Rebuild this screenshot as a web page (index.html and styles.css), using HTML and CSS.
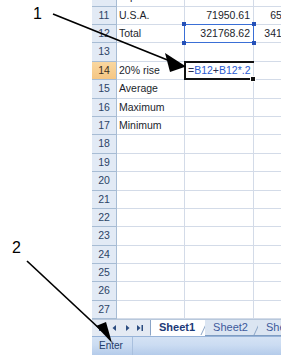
FILE: index.html
```html
<!DOCTYPE html>
<html>
<head>
<meta charset="utf-8">
<link rel="stylesheet" href="styles.css">
</head>
<body>
<div class="page">
  <div class="sheet">
    <div class="viewport">
      <div class="grid">
        <div class="rh">10</div><div class="c">Japan</div><div class="c num">52712.52</div><div class="c num">62174.30</div>
        <div class="rh">11</div><div class="c">U.S.A.</div><div class="c num">71950.61</div><div class="c num">65281.57</div>
        <div class="rh">12</div><div class="c">Total</div><div class="c num ref">321768.62</div><div class="c num">341992.07</div>
        <div class="rh">13</div><div class="c"></div><div class="c"></div><div class="c"></div>
        <div class="rh active">14</div><div class="c">20% rise</div><div class="c edit"><span class="op">=</span><span class="rf">B12</span><span class="op">+</span><span class="rf">B12</span><span class="rf">*.2</span></div><div class="c"></div>
        <div class="rh">15</div><div class="c">Average</div><div class="c"></div><div class="c"></div>
        <div class="rh">16</div><div class="c">Maximum</div><div class="c"></div><div class="c"></div>
        <div class="rh">17</div><div class="c">Minimum</div><div class="c"></div><div class="c"></div>
        <div class="rh">18</div><div class="c"></div><div class="c"></div><div class="c"></div>
        <div class="rh">19</div><div class="c"></div><div class="c"></div><div class="c"></div>
        <div class="rh">20</div><div class="c"></div><div class="c"></div><div class="c"></div>
        <div class="rh">21</div><div class="c"></div><div class="c"></div><div class="c"></div>
        <div class="rh">22</div><div class="c"></div><div class="c"></div><div class="c"></div>
        <div class="rh">23</div><div class="c"></div><div class="c"></div><div class="c"></div>
        <div class="rh">24</div><div class="c"></div><div class="c"></div><div class="c"></div>
        <div class="rh">25</div><div class="c"></div><div class="c"></div><div class="c"></div>
        <div class="rh">26</div><div class="c"></div><div class="c"></div><div class="c"></div>
        <div class="rh">27</div><div class="c"></div><div class="c"></div><div class="c"></div>
      </div>
    </div>
    <div class="tabbar">
      <div class="nav">
        <svg width="58" height="16" viewBox="0 0 58 16">
          <rect x="7" y="5" width="1.5" height="6" fill="#2b4c80"/>
          <polygon points="13,5 13,11 9.5,8" fill="#2b4c80"/>
          <polygon points="24,5 24,11 20.5,8" fill="#2b4c80"/>
          <polygon points="34,5 34,11 37.5,8" fill="#2b4c80"/>
          <polygon points="45,5 45,11 48.5,8" fill="#2b4c80"/>
          <rect x="49.5" y="5" width="1.5" height="6" fill="#2b4c80"/>
        </svg>
      </div>
      <div class="tab active">Sheet1</div>
      <div class="tab">Sheet2</div>
      <div class="tab">Sheet3</div>
    </div>
    <div class="statusbar">
      <div class="mode">Enter</div>
    </div>
  </div>
  <svg class="annot" width="281" height="355" viewBox="0 0 281 355">
    <text x="33" y="19" class="lbl">1</text>
    <text x="12" y="253" class="lbl">2</text>
    <line x1="53" y1="14" x2="170" y2="61" stroke="#000" stroke-width="1.7"/>
    <polygon points="165,53 186,66.5 170,72" fill="#000"/>
    <line x1="27" y1="261" x2="102" y2="331" stroke="#000" stroke-width="1.7"/>
    <polygon points="96,326 112,343 106,322" fill="#000"/>
  </svg>
</div>
</body>
</html>
```

FILE: styles.css
```css
html, body {
  margin: 0;
  padding: 0;
  background: #fff;
}

.page {
  position: relative;
  width: 281px;
  height: 355px;
  overflow: hidden;
  padding-left: 92px;
  box-sizing: border-box;
  font-family: "Liberation Sans", Arial, sans-serif;
}

.sheet {
  width: 240px;
  height: 355px;
  display: flex;
  flex-direction: column;
}

.viewport {
  height: 319px;
  overflow: hidden;
  flex: none;
}

.grid {
  display: grid;
  grid-template-columns: 25px 68px 69px 64px;
  grid-auto-rows: 18.4px;
  margin-top: -11.8px;
}

.grid > div {
  box-sizing: border-box;
  white-space: nowrap;
  overflow: hidden;
  font-size: 10.5px;
  line-height: 17.4px;
}

.rh {
  background: #e2eaf5;
  border-right: 1px solid #a7bcd4;
  border-bottom: 1px solid #a7bcd4;
  text-align: center;
  color: #2c4466;
}

.rh.active {
  background: linear-gradient(#f9d7a0, #f5c683);
  color: #3a3020;
}

.c {
  border-right: 1px solid #d3dbe8;
  border-bottom: 1px solid #d3dbe8;
  padding: 0 2px;
  color: #1b1e2c;
}

.num {
  text-align: right;
  padding-right: 3px;
}

.ref {
  position: relative;
  overflow: visible !important;
}

.ref::before {
  content: "";
  position: absolute;
  left: -1px;
  top: -1px;
  right: -1px;
  bottom: -1px;
  border: 1.5px solid #3a6fd6;
}

.ref::after {
  content: "";
  position: absolute;
  left: -3px;
  top: -3px;
  right: -3px;
  bottom: -3px;
  background:
    linear-gradient(#2550b8, #2550b8) left top / 4px 4px no-repeat,
    linear-gradient(#2550b8, #2550b8) right top / 4px 4px no-repeat,
    linear-gradient(#2550b8, #2550b8) left bottom / 4px 4px no-repeat,
    linear-gradient(#2550b8, #2550b8) right bottom / 4px 4px no-repeat;
}

.edit {
  position: relative;
  overflow: visible !important;
  padding-left: 3px !important;
}

.edit::before {
  content: "";
  position: absolute;
  left: -1px;
  top: -1px;
  right: -1px;
  bottom: -1px;
  border-top: 2px solid #111;
  border-left: 2px solid #111;
  border-bottom: 2px solid #111;
}

.edit::after {
  content: "";
  position: absolute;
  right: -3px;
  bottom: -3px;
  width: 4px;
  height: 4px;
  background: #111;
  border: 1px solid #fff;
}

.op {
  color: #2a2f55;
}

.rf {
  color: #2a5bd0;
}

.tabbar {
  height: 17px;
  flex: none;
  display: flex;
  align-items: stretch;
  background: #e4eaf3;
  border-top: 1px solid #b8c8dc;
  box-sizing: border-box;
}

.nav {
  width: 58px;
  flex: none;
  display: flex;
  align-items: center;
}

.tab {
  position: relative;
  padding: 0 10px 0 8px;
  font-size: 11px;
  line-height: 15px;
  color: #3d5a9c;
  background: #dbe5f2;
  border-bottom: 1px solid #7f9dc2;
}

.tab::after {
  content: "";
  position: absolute;
  right: 0;
  top: 0;
  bottom: 0;
  border-right: 1px solid #8aa4c6;
  transform: skewX(-25deg);
}

.tab.active {
  background: #fff;
  font-weight: bold;
  color: #1d3a78;
  border-left: 1px solid #8aa4c6;
  border-bottom: 1px solid #fff;
}

.statusbar {
  flex: 1;
  display: flex;
  background: linear-gradient(#d4e2f4, #cbdcf2 45%, #b4cbea);
  border-top: 1px solid #97b3d8;
}

.mode {
  padding: 0 9px 0 7px;
  font-size: 10px;
  line-height: 17px;
  color: #1e3d6b;
  border-right: 1px solid #a9c0de;
}

.annot {
  position: absolute;
  left: 0;
  top: 0;
  pointer-events: none;
}

.lbl {
  font-family: "Liberation Sans", Arial, sans-serif;
  font-size: 16px;
  fill: #000;
}
```
